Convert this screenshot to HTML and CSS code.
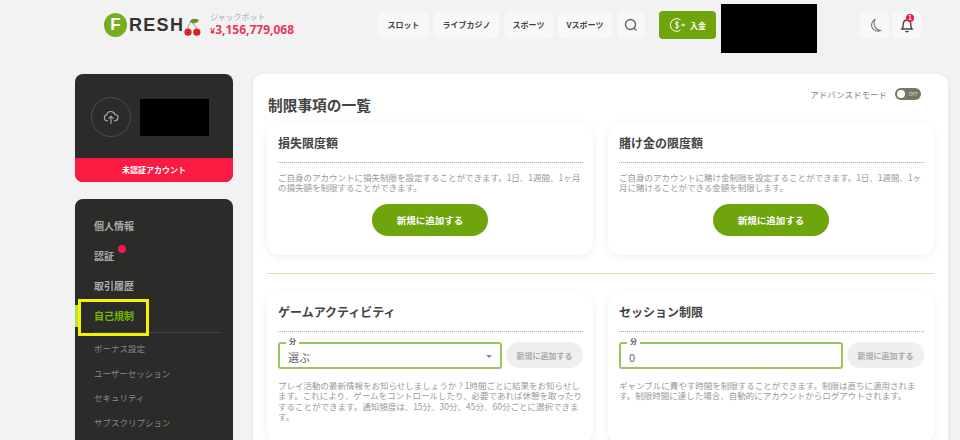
FILE: index.html
```html
<!DOCTYPE html>
<html lang="ja">
<head>
    <meta charset="UTF-8">
    <meta name="viewport" content="width=device-width, initial-scale=1.0">
    <title>制限事項の一覧</title>
    <link rel="stylesheet" href="styles.css">
</head>
<body>
    <header class="topbar">
        <div class="logo">
            <span class="logo-f">F</span>
            <span class="logo-text">RESH</span>
            <svg class="logo-cherry" width="17" height="18" viewBox="0 0 17 18">
                <path d="M6 3.500C7 0.500 11 0 15 2C13.500 5.500 9 6.500 6 3.500Z" fill="#6b8f2e"/>
                <path d="M7 3C5.500 6 4 8 3.800 11M7 3C9 6 12 8 12.500 11" fill="none" stroke="#7a7a3a" stroke-width="0.7"/>
                <circle cx="4" cy="14.200" r="3.600" fill="#d8202e"/>
                <circle cx="12.800" cy="14.200" r="3.600" fill="#d8202e"/>
            </svg>
        </div>
        <div class="jackpot">
            <div class="jackpot-label">ジャックポット</div>
            <div class="jackpot-value"><small>¥</small>3,156,779,068</div>
        </div>
        <nav class="topnav">
            <a class="nav-btn w-slot">スロット</a>
            <a class="nav-btn w-live">ライブカジノ</a>
            <a class="nav-btn w-sport">スポーツ</a>
            <a class="nav-btn w-v">Vスポーツ</a>
            <a class="nav-btn w-icon">
                <svg width="14" height="14" viewBox="0 0 14 14" fill="none" stroke="#666" stroke-width="1.400"><circle cx="6.500" cy="6.500" r="5"/><path d="M10 10l2.500 2.500"/></svg>
            </a>
        </nav>
        <a class="deposit">
            <svg width="16" height="16" viewBox="0 0 16 16" fill="none" stroke="#fff" stroke-width="1"><path d="M11.500 3A6.300 6.300 0 1 0 11.500 13"/><path d="M9.500 5.800C8.800 4.900 6.500 4.900 6.500 6.400C6.500 8 9.700 7.700 9.700 9.500C9.700 11 7.200 11 6.300 10.100M8 4V12M12 8H15.500M14 6.500L15.500 8L14 9.500"/></svg>
            入金
        </a>
        <div class="redact redact-top"></div>
        <div class="top-right">
            <a class="nav-btn w-icon2">
                <svg width="14" height="15" viewBox="0 0 14 15" fill="none" stroke="#777" stroke-width="1.100"><path d="M7 1.500A6 6 0 1 0 12.500 12.500A7.500 7.500 0 0 1 7 1.500Z"/></svg>
            </a>
            <a class="nav-btn w-icon2 bell">
                <svg width="14" height="16" viewBox="0 0 14 16" fill="none" stroke="#444" stroke-width="1.400"><path d="M2 12C3.500 10.500 3 8.500 3.300 6.500C3.700 4 5.300 3 7 3C8.700 3 10.300 4 10.700 6.500C11 8.500 10.500 10.500 12 12Z"/><path d="M5.500 14C6 15 8 15 8.500 14"/></svg>
                <span class="bell-count">1</span>
            </a>
        </div>
    </header>

    <div class="page">
        <aside class="sidebar">
            <div class="profile">
                <div class="profile-top">
                    <div class="avatar">
                        <svg width="16" height="15" viewBox="0 0 20 18" fill="none" stroke="#aaa" stroke-width="1.400"><path d="M6.500 13H5A3.700 3.700 0 0 1 4.600 5.700A5.300 5.300 0 0 1 14.800 5.200A3.900 3.900 0 0 1 15 13H13.500"/><path d="M10 17V8M7 10.500L10 7.500L13 10.500"/></svg>
                    </div>
                    <div class="redact redact-name"></div>
                </div>
                <div class="unverified">未認証アカウント</div>
            </div>
            <div class="menu">
                <a class="menu-item">個人情報</a>
                <a class="menu-item">認証<span class="dot"></span></a>
                <a class="menu-item">取引履歴</a>
                <a class="menu-item active">自己規制<span class="note-box"></span></a>
                <div class="menu-line"></div>
                <a class="sub-item">ボーナス設定</a>
                <a class="sub-item">ユーザーセッション</a>
                <a class="sub-item">セキュリティ</a>
                <a class="sub-item">サブスクリプション</a>
            </div>
        </aside>

        <main class="main">
            <div class="main-head">
                <h1>制限事項の一覧</h1>
                <div class="advanced">
                    <span>アドバンスドモード</span>
                    <span class="toggle"><i></i><b>OFF</b></span>
                </div>
            </div>

            <div class="cards">
                <section class="card">
                    <h2>損失限度額</h2>
                    <p>ご自身のアカウントに損失制限を設定することができます。1日、1週間、1ヶ月の損失額を制限することができます。</p>
                    <button class="add-btn">新規に追加する</button>
                </section>
                <section class="card">
                    <h2>賭け金の限度額</h2>
                    <p>ご自身のアカウントに賭け金制限を設定することができます。1日、1週間、1ヶ<br>月に賭けることができる金額を制限します。</p>
                    <button class="add-btn">新規に追加する</button>
                </section>
            </div>

            <hr class="divider">

            <div class="cards">
                <section class="card">
                    <h2>ゲームアクティビティ</h2>
                    <div class="field-row">
                        <div class="field">
                            <span class="field-label">分</span>
                            <span class="field-value">選ぶ</span>
                            <span class="caret"></span>
                        </div>
                        <button class="add-small">新規に追加する</button>
                    </div>
                    <p>プレイ活動の最新情報をお知らせしましょうか？1時間ごとに結果をお知らせします。これにより、ゲームをコントロールしたり、必要であれば休憩を取ったりすることができます。通知頻度は、15分、30分、45分、60分ごとに選択できま<br>す。</p>
                </section>
                <section class="card">
                    <h2>セッション制限</h2>
                    <div class="field-row">
                        <div class="field">
                            <span class="field-label">分</span>
                            <span class="field-value">0</span>
                        </div>
                        <button class="add-small">新規に追加する</button>
                    </div>
                    <p>ギャンブルに費やす時間を制限することができます。制限は直ちに適用されます。制限時間に達した場合、自動的にアカウントからログアウトされます。</p>
                </section>
            </div>
        </main>
    </div>
</body>
</html>
```

FILE: styles.css
```css
html, body { margin: 0; height: 440px; overflow: hidden; }
body { background: #f2f2f2; color: #333; font-family: "Noto Sans CJK JP", "Noto Sans", sans-serif; }
a { display: block; }
.redact { background: #000; }

/* top bar */
.topbar { position: relative; display: flex; align-items: flex-start; height: 74px; padding-left: 104px; box-sizing: border-box; }
.logo { display: flex; align-items: center; height: 24px; margin-top: 13px; width: 106px; }
.logo-f { width: 23px; height: 24px; border-radius: 50%; background: #76ae1e; color: #fff; font: bold 17px/24px "Liberation Sans", sans-serif; text-align: center; flex: none; }
.logo-text { font: bold 18px/24px "Liberation Sans", sans-serif; color: #333; letter-spacing: 1.300px; margin-left: 2px; }
.logo-cherry { margin-top: 3px; flex: none; }
.jackpot { width: 168px; margin-top: 11px; }
.jackpot-label { font-size: 8px; line-height: 11px; color: #aaa; }
.jackpot-value { font: bold 12px/15px "Noto Sans", sans-serif; color: #e8385a; }
.jackpot-value small { font-size: 9px; }
.topnav { display: flex; gap: 5px; margin-top: 11px; }
.nav-btn { height: 28px; background: #f8f8f8; border-radius: 6px; font-size: 8px; font-weight: 700; line-height: 28px; text-align: center; color: #444; display: flex; align-items: center; justify-content: center; }
.w-slot { width: 51px; }
.w-live { width: 65px; }
.w-sport { width: 49px; }
.w-v { width: 54px; }
.w-icon { width: 28px; }
.deposit { display: flex; align-items: center; justify-content: center; gap: 5px; width: 57px; height: 28px; margin: 11px 5px 0 14px; background: #6ea40c; border-radius: 4px; color: #fff; font-size: 8px; font-weight: 700; }
.redact-top { width: 96px; height: 49px; margin-top: 4px; }
.top-right { display: flex; gap: 3px; margin: 11px 0 0 43px; }
.w-icon2 { width: 29px; }
.bell { position: relative; }
.bell-count { position: absolute; top: 3px; right: 7px; width: 8px; height: 8px; border-radius: 50%; background: #f0194a; color: #fff; font-size: 6px; line-height: 8px; text-align: center; }

/* page */
.page { display: flex; gap: 20px; padding-left: 75px; align-items: flex-start; height: 366px; overflow: hidden; }
.sidebar { width: 158px; flex: none; }
.profile { height: 108px; border-radius: 8px; background: #2b2b29; overflow: hidden; display: flex; flex-direction: column; }
.profile-top { flex: 1; display: flex; align-items: center; padding: 2px 24px 0 16px; gap: 8px; }
.avatar { width: 40px; height: 40px; border: 1px solid #4d4d4a; border-radius: 50%; display: flex; align-items: center; justify-content: center; box-sizing: border-box; flex: none; }
.redact-name { width: 69px; height: 37px; margin-left: 1px; }
.unverified { height: 24px; background: #fb1a42; color: #fff; font-size: 8px; font-weight: 700; line-height: 24px; text-align: center; }
.menu { position: relative; margin-top: 17px; height: 300px; border-radius: 8px; background: #2b2b29; padding: 12px 0 0 19px; box-sizing: border-box; }
.menu-item { position: relative; height: 30px; font-size: 10px; font-weight: 700; line-height: 30px; color: #aaa; }
.menu-item.active { color: #76b900; }
.menu-item.active::before { content: ""; position: absolute; left: -19px; top: 4px; width: 3px; height: 22px; background: #b6e03c; }
.dot { position: absolute; left: 24px; top: 4px; width: 8px; height: 8px; border-radius: 50%; background: #f0194a; }
.note-box { position: absolute; left: -16px; top: -2px; width: 71px; height: 37px; border: 3px solid #f4f400; box-sizing: border-box; }
.menu-line { height: 1px; margin: 1px 13px 3px 0; background: #444; }
.sub-item { height: 24.500px; font-size: 8.500px; line-height: 24.500px; color: #888; }

/* main panel */
.main { width: 695px; height: 400px; background: #fff; border-radius: 10px; padding: 0 14px; box-sizing: border-box; flex: none; box-shadow: 0 0 4px rgba(0,0,0,0.08); }
.main-head { display: flex; justify-content: space-between; height: 49px; }
.main-head h1 { margin: 21px 0 0 1px; font-size: 14.700px; line-height: 20px; font-weight: 700; color: #444; }
.advanced { display: flex; align-items: flex-start; gap: 8px; margin: 14px -1px 0 0; font-size: 8.500px; line-height: 13px; color: #888; }
.toggle { position: relative; width: 26px; height: 12px; border-radius: 6px; background: #6f7a60; margin-right: 14px; }
.toggle i { position: absolute; left: 2px; top: 2px; width: 8px; height: 8px; border-radius: 50%; background: #fff; }
.toggle b { position: absolute; right: 3px; top: 0; font-size: 5px; line-height: 12px; color: #ddd; font-weight: 400; }
.cards { display: grid; grid-template-columns: 326px 326px; gap: 15px; }
.card { height: 132px; background: #fff; border-radius: 14px; padding: 0 10px 0 11px; box-shadow: 0 2px 8px rgba(0,0,0,0.07); box-sizing: border-box; }
.card h2 { margin: 0; padding: 10px 0 9px; height: 40px; box-sizing: border-box; border-bottom: 1px dotted #aaa; font-size: 12px; line-height: 20px; font-weight: 700; color: #444; }
.card p { margin: 9px 0 0; font-size: 8.500px; line-height: 10.300px; color: #999; }
.add-btn { display: block; width: 116px; height: 32px; margin: 11px 0 0 94px; border: 0; border-radius: 16px; background: #6ea40c; color: #fff; font: 700 9.500px "Noto Sans CJK JP", sans-serif; }
.divider { height: 1px; margin: 18px 0; border: 0; background: #d5e3a8; }
.cards:last-child .card { height: 152px; }
.field-row { display: flex; gap: 4px; margin-top: 10px; }
.field { position: relative; flex: 1; height: 27px; border: 2px solid #9cc45e; border-radius: 3px; box-sizing: border-box; display: flex; align-items: center; padding: 2px 8px 0; font-size: 11px; color: #666; }
.field-label { position: absolute; left: 6px; top: -7px; padding: 0 3px; background: #fff; font-size: 7px; font-weight: 700; line-height: 9px; color: #555; }
.caret { margin-left: auto; border: 3.500px solid transparent; border-top-color: #888; border-bottom: 0; }
.add-small { width: 77px; height: 26px; flex: none; border: 0; border-radius: 13px; background: #efefef; color: #aaa; font: 700 8px "Noto Sans CJK JP", sans-serif; padding: 0; }
.field-row + p { margin-top: 11px; }
```
